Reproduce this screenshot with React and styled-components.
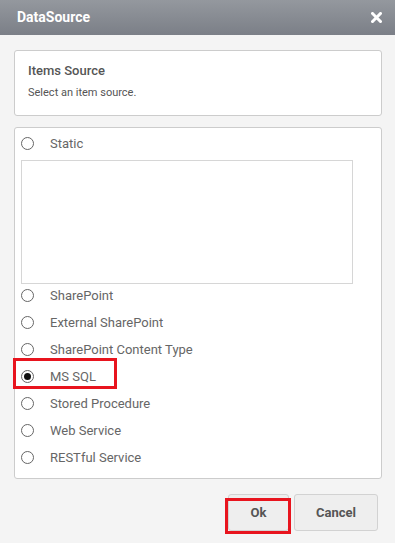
import React from "react";
import styled, { createGlobalStyle } from "styled-components";

const Global = createGlobalStyle`
  html, body { margin: 0; padding: 0; }
  body { background: #f4f4f4; font-family: Roboto, "Liberation Sans", Arial, sans-serif; }
  * { box-sizing: border-box; }
`;

const Dialog = styled.div`
  width: 395px;
  height: 543px;
  background: #f4f4f4;
  display: flex;
  flex-direction: column;
  overflow: hidden;
`;

const Header = styled.div`
  height: 35px;
  background: linear-gradient(#94989e, #7b7f87);
  display: flex;
  align-items: center;
  justify-content: space-between;
  padding: 0 13px 0 17px;
  color: #fff;
`;

const Title = styled.div`
  font-size: 14px;
  font-weight: 700;
  margin-top: -2px;
`;

const Body = styled.div`
  padding: 15px 13px 0 14px;
  display: flex;
  flex-direction: column;
  gap: 11px;
`;

const Card = styled.div`
  background: #fff;
  border: 1px solid #cccccc;
  border-radius: 3px;
  padding: ${(p) => p.$pad};
  position: relative;
`;

const CardTitle = styled.div`
  font-size: 13px;
  font-weight: 500;
  color: #555;
  line-height: 16px;
`;

const CardText = styled.div`
  font-size: 11px;
  color: #555;
  line-height: 14px;
  margin-top: 7px;
`;

const Row = styled.div`
  height: 27px;
  display: flex;
  align-items: center;
  position: relative;
  padding-left: 6px;
`;

const Radio = styled.span`
  width: 13px;
  height: 13px;
  border-radius: 50%;
  border: 1px solid #666;
  background: #fff;
  display: inline-flex;
  align-items: center;
  justify-content: center;
  margin-right: 16px;
  &::after {
    content: "";
    width: 7px;
    height: 7px;
    border-radius: 50%;
    background: ${(p) => (p.$checked ? "#111" : "transparent")};
  }
`;

const Label = styled.span`
  font-size: 13px;
  color: #666;
`;

const TextArea = styled.div`
  margin: 3px 0 -2px 6px;
  width: 332px;
  height: 124px;
  border: 1px solid #d6d6d6;
  background: #fff;
`;

const Highlight = styled.span`
  position: absolute;
  left: ${(p) => p.$left}px;
  top: ${(p) => p.$top}px;
  width: ${(p) => p.$w}px;
  height: ${(p) => p.$h}px;
  border: 3px solid #e8141e;
  pointer-events: none;
`;

const Footer = styled.div`
  display: flex;
  justify-content: flex-end;
  gap: 5px;
  padding: 15px 17px 0 0;
`;

const Button = styled.button`
  position: relative;
  width: ${(p) => p.$w}px;
  height: 37px;
  background: #eeeeee;
  border: 1px solid #d2d2d2;
  border-radius: 3px;
  font-family: Roboto, "Liberation Sans", Arial, sans-serif;
  font-size: 13px;
  font-weight: 700;
  color: #555;
  padding: 0;
`;

const CloseIcon = () => (
  <svg width="11" height="11" viewBox="0 0 11 11">
    <path d="M1.5 1.5 L9.5 9.5 M9.5 1.5 L1.5 9.5" stroke="#fff" strokeWidth="3" strokeLinecap="square" />
  </svg>
);

const options = [
  "SharePoint",
  "External SharePoint",
  "SharePoint Content Type",
  "MS SQL",
  "Stored Procedure",
  "Web Service",
  "RESTful Service",
];

export default function App() {
  return (
    <>
      <Global />
      <Dialog>
        <Header>
          <Title>DataSource</Title>
          <CloseIcon />
        </Header>
        <Body>
          <Card $pad="12px 13px 15px 13px">
            <CardTitle>Items Source</CardTitle>
            <CardText>Select an item source.</CardText>
          </Card>
          <Card $pad="2px 0 7px 0">
            <Row>
              <Radio />
              <Label>Static</Label>
            </Row>
            <TextArea />
            {options.map((o) => (
              <Row key={o}>
                <Radio $checked={o === "MS SQL"} />
                <Label>{o}</Label>
                {o === "MS SQL" && <Highlight $left={-2} $top={-5} $w={104} $h={31} />}
              </Row>
            ))}
          </Card>
        </Body>
        <Footer>
          <Button $w={61}>
            Ok
            <Highlight $left={-4} $top={3} $w={66} $h={36} />
          </Button>
          <Button $w={84}>Cancel</Button>
        </Footer>
      </Dialog>
    </>
  );
}
